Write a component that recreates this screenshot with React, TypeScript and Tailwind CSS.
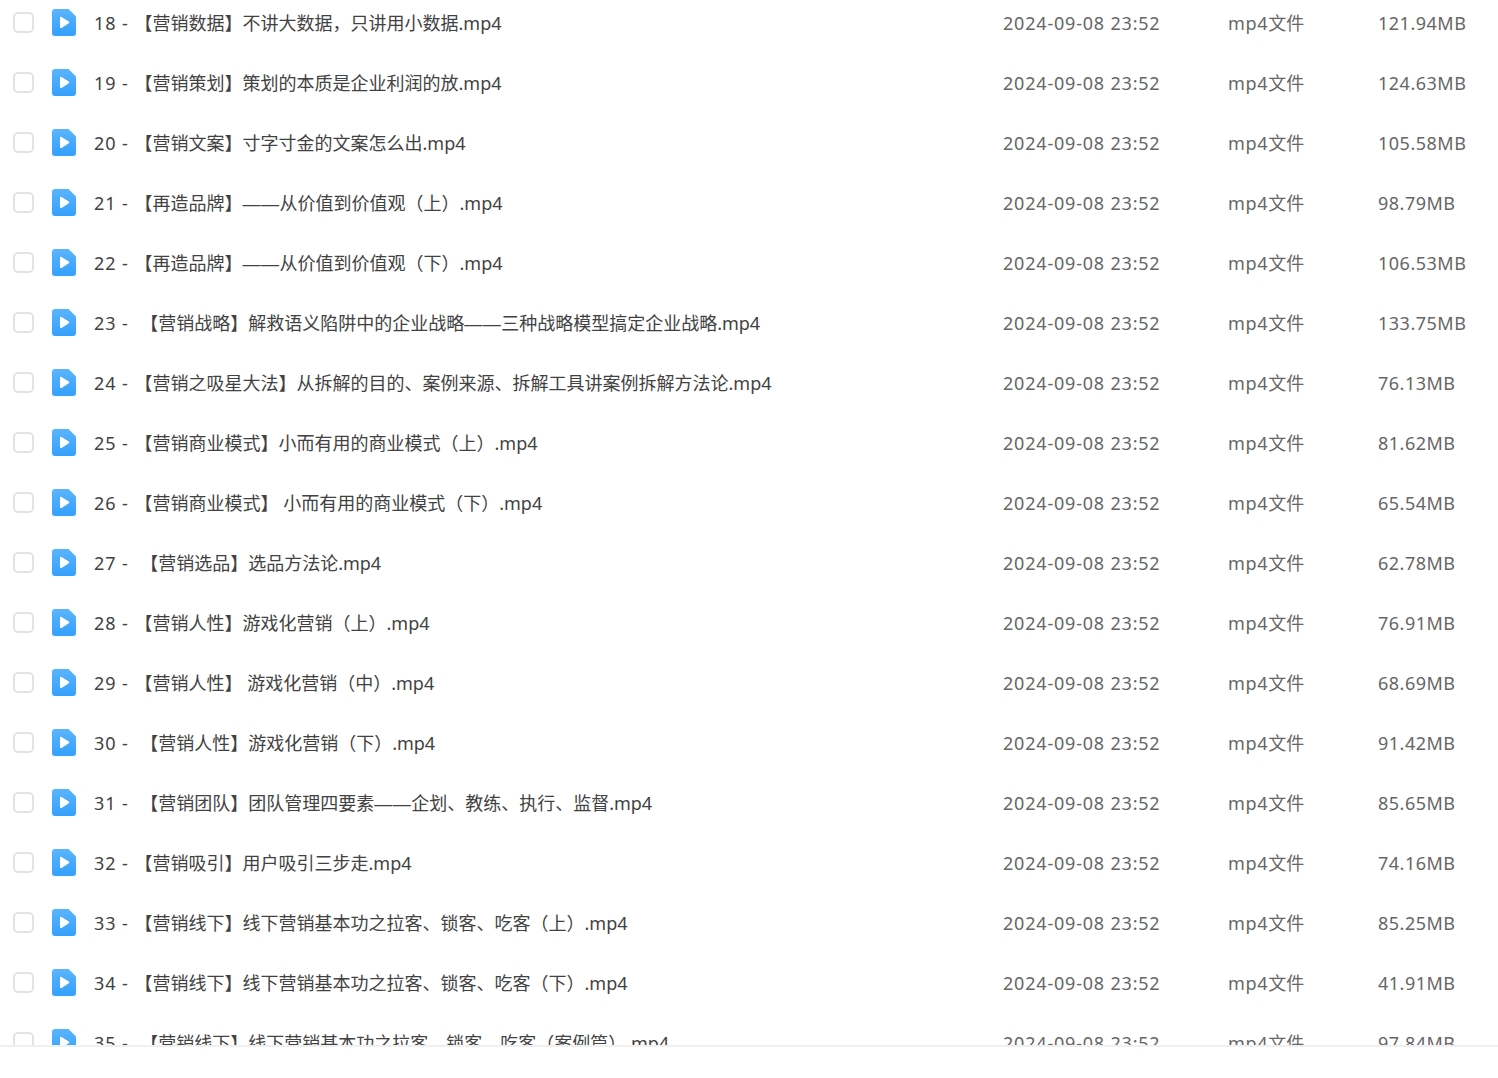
const files = [
  { num: '18 - ', name: '【营销数据】不讲大数据，只讲用小数据.mp4', size: '121.94MB' },
  { num: '19 - ', name: '【营销策划】策划的本质是企业利润的放.mp4', size: '124.63MB' },
  { num: '20 - ', name: '【营销文案】寸字寸金的文案怎么出.mp4', size: '105.58MB' },
  { num: '21 - ', name: '【再造品牌】', dash: true, rest: '从价值到价值观（上）.mp4', size: '98.79MB' },
  { num: '22 - ', name: '【再造品牌】', dash: true, rest: '从价值到价值观（下）.mp4', size: '106.53MB' },
  { num: '23 -  ', name: '【营销战略】解救语义陷阱中的企业战略', dash: true, rest: '三种战略模型搞定企业战略.mp4', size: '133.75MB' },
  { num: '24 - ', name: '【营销之吸星大法】从拆解的目的、案例来源、拆解工具讲案例拆解方法论.mp4', size: '76.13MB' },
  { num: '25 - ', name: '【营销商业模式】小而有用的商业模式（上）.mp4', size: '81.62MB' },
  { num: '26 - ', name: '【营销商业模式】 小而有用的商业模式（下）.mp4', size: '65.54MB' },
  { num: '27 -  ', name: '【营销选品】选品方法论.mp4', size: '62.78MB' },
  { num: '28 - ', name: '【营销人性】游戏化营销（上）.mp4', size: '76.91MB' },
  { num: '29 - ', name: '【营销人性】 游戏化营销（中）.mp4', size: '68.69MB' },
  { num: '30 -  ', name: '【营销人性】游戏化营销（下）.mp4', size: '91.42MB' },
  { num: '31 -  ', name: '【营销团队】团队管理四要素', dash: true, rest: '企划、教练、执行、监督.mp4', size: '85.65MB' },
  { num: '32 - ', name: '【营销吸引】用户吸引三步走.mp4', size: '74.16MB' },
  { num: '33 - ', name: '【营销线下】线下营销基本功之拉客、锁客、吃客（上）.mp4', size: '85.25MB' },
  { num: '34 - ', name: '【营销线下】线下营销基本功之拉客、锁客、吃客（下）.mp4', size: '41.91MB' },
  { num: '35 -  ', name: '【营销线下】线下营销基本功之拉客、锁客、吃客（案例篇）.mp4', size: '97.84MB' },
]

function VideoIcon() {
  return (
    <svg width="24" height="27" viewBox="0 0 24 27" className="shrink-0 mb-px">
      <defs>
        <linearGradient id="fileBlue" x1="0" y1="0" x2="0" y2="1">
          <stop offset="0" stopColor="#5ab4fb" />
          <stop offset="1" stopColor="#34a0ff" />
        </linearGradient>
      </defs>
      <path d="M3 0H16.5L24 7.5V24a3 3 0 0 1-3 3H3a3 3 0 0 1-3-3V3a3 3 0 0 1 3-3z" fill="url(#fileBlue)" />
      <path d="M8 8.7c0-.8.8-1.2 1.5-.8l7.3 4.7c.6.4.6 1.2 0 1.6l-7.3 4.7c-.7.4-1.5 0-1.5-.8z" fill="#fff" />
    </svg>
  )
}

export default function App() {
  return (
    <div className="bg-white h-[1078px] overflow-hidden font-['Noto_Sans','Noto_Sans_CJK_SC',sans-serif]">
      <div className="h-[1045px] overflow-hidden">
        <div className="-mt-[7px]">
          {files.map((file) => (
            <div key={file.num} className="flex items-center h-[60px] text-[18px] whitespace-pre">
              <div className="w-[21px] h-[21px] ml-[13px] mb-[2px] rounded-[5px] border-2 border-[#e3e3e3] shrink-0"></div>
              <div className="ml-[18px] flex items-center"><VideoIcon /></div>
              <div className="ml-[18px] w-[909px] text-[#424242]">
                <span className="tracking-[0.95px]">{file.num}</span>
                {file.name}
                {file.dash && <span className="font-['Liberation_Sans'] leading-[0] tracking-[0.5px]">——</span>}
                {file.rest}
              </div>
              <div className="w-[225px] text-[#666] tracking-[0.8px]">2024-09-08 23:52</div>
              <div className="w-[150px] text-[#666]"><span className="tracking-[0.7px]">mp4</span>文件</div>
              <div className="text-[#666] tracking-[0.5px]">{file.size}</div>
            </div>
          ))}
        </div>
      </div>
      <div className="h-[2px] bg-[#f0f0f0]"></div>
    </div>
  )
}
